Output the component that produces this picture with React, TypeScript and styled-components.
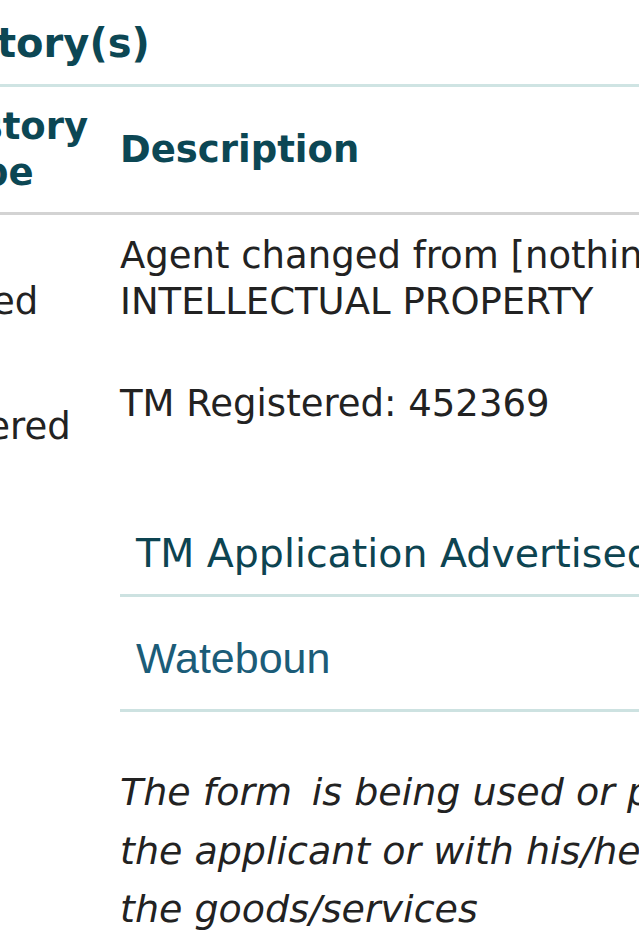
import React from "react";
import styled, { createGlobalStyle } from "styled-components";

const GlobalStyle = createGlobalStyle`
  html, body {
    margin: 0;
    padding: 0;
    background: #ffffff;
    overflow: hidden;
  }
  body {
    font-family: "DejaVu Sans", Verdana, sans-serif;
    color: #222222;
  }
`;

const Page = styled.div`
  margin-left: -140px;
  width: 1500px;
`;

const Title = styled.h2`
  margin: 0;
  padding: 19px 0 17px 66px;
  font-family: "DejaVu Sans", Verdana, sans-serif;
  font-weight: bold;
  font-size: 40px;
  line-height: 48px;
  color: #0c4754;
  border-bottom: 3px solid #cfe4e3;
`;

const Table = styled.table`
  border-collapse: collapse;
  table-layout: fixed;
  width: 1500px;
`;

const HeadCell = styled.th<{ $indent?: number }>`
  text-align: left;
  vertical-align: middle;
  padding: 17px 16px 16px ${(p) => p.$indent ?? 16}px;
  font-family: "DejaVu Sans", Verdana, sans-serif;
  font-weight: bold;
  font-size: 37px;
  line-height: 46px;
  color: #0c4754;
  border-bottom: 3px solid #d3d3d3;
`;

const Cell = styled.td<{ $indent?: number }>`
  vertical-align: middle;
  padding: 18px 16px 15px ${(p) => p.$indent ?? 16}px;
  font-size: 37px;
  line-height: 46px;
  color: #222222;
`;

const Section = styled.div`
  margin: 50px 0 0 260px;
`;

const AccordionHeader = styled.div`
  padding: 15px 16px 18px;
  font-size: 39.5px;
  line-height: 46px;
  color: #0d4451;
  border-bottom: 3px solid #cde2e1;
`;

const AccordionPanel = styled.div`
  padding: 37px 16px 26px;
  font-family: "Liberation Sans", Arial, sans-serif;
  font-size: 43px;
  line-height: 49px;
  color: #1b5c78;
  border-bottom: 3px solid #cde2e1;
`;

const Note = styled.p`
  margin: 51px 0 0;
  font-style: italic;
  font-size: 38px;
  line-height: 58.5px;
  color: #222222;
  white-space: nowrap;
`;

export default function App() {
  return (
    <>
      <GlobalStyle />
      <Page>
        <Title>History(s)</Title>
        <Table>
          <colgroup>
            <col style={{ width: 244 }} />
            <col />
          </colgroup>
          <thead>
            <tr>
              <HeadCell $indent={77}>
                History
                <br />
                Type
              </HeadCell>
              <HeadCell>Description</HeadCell>
            </tr>
          </thead>
          <tbody>
            <tr>
              <Cell $indent={13}>Agent Changed</Cell>
              <Cell>
                Agent changed from [nothing] to CARIBBEAN
                <br />
                INTELLECTUAL PROPERTY
              </Cell>
            </tr>
            <tr>
              <Cell $indent={13}>TM Registered</Cell>
              <Cell>TM Registered: 452369</Cell>
            </tr>
          </tbody>
        </Table>
        <Section>
          <AccordionHeader>TM Application Advertised</AccordionHeader>
          <AccordionPanel>Wateboun</AccordionPanel>
          <Note>
            The form{"\u2009"} is being used or proposed to be used by
            <br />
            the applicant or with his/her consent in relation to
            <br />
            the goods/services
          </Note>
        </Section>
      </Page>
    </>
  );
}
